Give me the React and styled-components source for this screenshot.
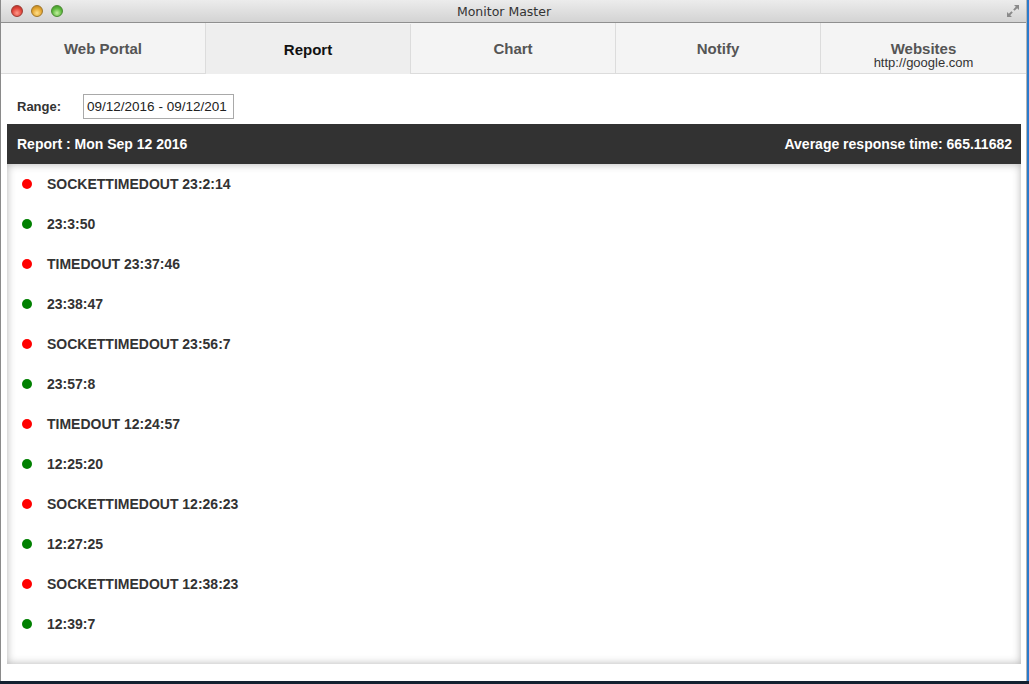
import React from 'react';
import styled, { createGlobalStyle } from 'styled-components';

const GlobalStyle = createGlobalStyle`
    html, body {
        margin: 0;
        padding: 0;
        background: #142233;
    }
    body {
        font-family: "Liberation Sans", Arial, sans-serif;
    }
`

const Desktop = styled.div`
    width: 1029px;
    height: 684px;
    background: linear-gradient(to bottom, #2a7acb 0, #2a7acb 681px, #132130 681px);
    overflow: hidden;
`
const Window = styled.div`
    width: 1025px;
    height: 681px;
    background: white;
    border-left: 1px solid #8a8a8a;
    border-right: 1px solid #b5b5b5;
    display: flex;
    flex-direction: column;
`
const TitleBar = styled.div`
    height: 22px;
    flex: none;
    background: linear-gradient(to bottom, #ececec, #d3d3d3);
    border-bottom: 1px solid #8f8f8f;
    display: flex;
    align-items: center;
    padding: 0 0 0 10px;
`
const Lights = styled.div`
    display: flex;
    gap: 8px;
`
const Light = styled.span`
    width: 12px;
    height: 12px;
    border-radius: 50%;
    box-sizing: border-box;
    border: 1px solid ${p => p.$edge};
    background: radial-gradient(circle at 50% 70%, ${p => p.$glow} 0, ${p => p.$color} 55%, ${p => p.$dark} 100%);
`
const Title = styled.div`
    flex: 1;
    text-align: center;
    font-family: "DejaVu Sans", "Liberation Sans", sans-serif;
    font-size: 12.5px;
    color: #333;
    margin-left: -60px;
`
const Resize = styled.div`
    width: 16px;
    height: 16px;
    margin-right: 5px;
    display: flex;
`
const Tabs = styled.div`
    display: grid;
    grid-template-columns: repeat(5, 1fr);
    height: 50px;
    flex: none;
    background: #f4f4f4;
    border-bottom: 1px solid #dcdcdc;
`
const Tab = styled.div`
    display: flex;
    flex-direction: column;
    align-items: center;
    justify-content: ${p => p.$withSub ? 'flex-start' : 'center'};
    padding-top: ${p => p.$withSub ? '18px' : p.$active ? '1px' : '2px'};
    box-sizing: border-box;
    border-right: 1px solid #dcdcdc;
    font-weight: bold;
    font-size: 15px;
    line-height: 16px;
    color: ${p => p.$active ? '#111' : '#555'};
    background: ${p => p.$active ? '#eeeeee' : '#f4f4f4'};
    ${p => p.$active && `
        border-left: 1px solid #dcdcdc;
        margin: 1px 0 -1px -1px;
    `}
    &:last-child {
        border-right: none;
    }
`
const TabSub = styled.span`
    font-weight: normal;
    font-size: 13px;
    color: #333;
    line-height: 12px;
`
const RangeRow = styled.div`
    display: flex;
    align-items: center;
    padding: 20px 0 5px 16px;
    gap: 22px;
    font-size: 13px;
    font-weight: bold;
    color: #333;
`
const RangeInput = styled.div`
    width: 146px;
    height: 23px;
    border: 1px solid #a9a9a9;
    padding: 0 0 0 3px;
    font-weight: normal;
    font-size: 13.5px;
    color: #222;
    line-height: 23px;
    white-space: nowrap;
    overflow: hidden;
`
const Panel = styled.div`
    margin: 0 5px 0 6px;
    height: 540px;
    display: flex;
    flex-direction: column;
`
const PanelHeader = styled.div`
    height: 40px;
    flex: none;
    background: #323232;
    color: white;
    font-size: 14px;
    font-weight: bold;
    display: flex;
    align-items: center;
    justify-content: space-between;
    padding: 0 9px 0 10px;
`
const PanelBody = styled.div`
    flex: 1;
    box-shadow: inset 0 0 9px rgba(0, 0, 0, 0.3);
    padding: 0 0 19px;
`
const Row = styled.div`
    height: 40px;
    display: flex;
    align-items: center;
    padding-left: 15px;
    gap: 15px;
    font-size: 14px;
    font-weight: bold;
    color: #333;
`
const Dot = styled.span`
    width: 10px;
    height: 10px;
    border-radius: 50%;
    background: ${p => p.$ok ? '#008000' : '#ff0000'};
`

const entries = [
    [false, 'SOCKETTIMEDOUT 23:2:14'],
    [true, '23:3:50'],
    [false, 'TIMEDOUT 23:37:46'],
    [true, '23:38:47'],
    [false, 'SOCKETTIMEDOUT 23:56:7'],
    [true, '23:57:8'],
    [false, 'TIMEDOUT 12:24:57'],
    [true, '12:25:20'],
    [false, 'SOCKETTIMEDOUT 12:26:23'],
    [true, '12:27:25'],
    [false, 'SOCKETTIMEDOUT 12:38:23'],
    [true, '12:39:7'],
];

export default function App() {
    return (
        <Desktop>
            <GlobalStyle />
            <Window>
                <TitleBar>
                    <Lights>
                        <Light $color="#e0443a" $dark="#a82a22" $glow="#ff9a8a" $edge="#9c3a33" />
                        <Light $color="#e3a530" $dark="#b0781a" $glow="#ffe08a" $edge="#a0772a" />
                        <Light $color="#5cb83c" $dark="#3a8a22" $glow="#c4f0a0" $edge="#4a8a33" />
                    </Lights>
                    <Title>Monitor Master</Title>
                    <Resize>
                        <svg width="16" height="16" viewBox="0 0 16 16">
                            <path d="M9 2h5v5l-1.8-1.8-2.6 2.6-1.4-1.4 2.6-2.6z" fill="#8a8a8a" />
                            <path d="M7 14H2V9l1.8 1.8 2.6-2.6 1.4 1.4-2.6 2.6z" fill="#8a8a8a" />
                        </svg>
                    </Resize>
                </TitleBar>
                <Tabs>
                    <Tab>Web Portal</Tab>
                    <Tab $active>Report</Tab>
                    <Tab>Chart</Tab>
                    <Tab>Notify</Tab>
                    <Tab $withSub>
                        Websites
                        <TabSub>http://google.com</TabSub>
                    </Tab>
                </Tabs>
                <RangeRow>
                    Range:
                    <RangeInput>09/12/2016 - 09/12/201</RangeInput>
                </RangeRow>
                <Panel>
                    <PanelHeader>
                        <span>Report : Mon Sep 12 2016</span>
                        <span>Average response time: 665.11682</span>
                    </PanelHeader>
                    <PanelBody>
                        {entries.map(([ok, text], i) => (
                            <Row key={i}>
                                <Dot $ok={ok} />
                                {text}
                            </Row>
                        ))}
                    </PanelBody>
                </Panel>
            </Window>
        </Desktop>
    );
}
